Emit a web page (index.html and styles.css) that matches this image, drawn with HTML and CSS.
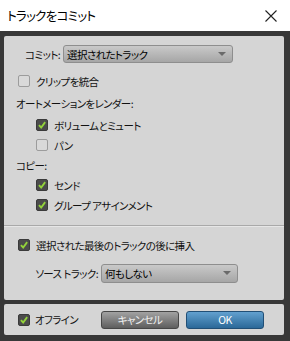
FILE: index.html
```html
<!DOCTYPE html>
<html lang="ja">
<head>
    <meta charset="UTF-8">
    <title>トラックをコミット</title>
    <link rel="stylesheet" href="styles.css">
</head>
<body>

<div class="dialog">
    <div class="titlebar">
        <span class="title">トラックをコミット</span>
        <svg class="close" width="12" height="12" viewBox="0 0 12 12">
            <path d="M0.5 0.5 L11.5 11.5 M11.5 0.5 L0.5 11.5" stroke="#222" stroke-width="1.1" fill="none"/>
        </svg>
    </div>

    <div class="frame">
        <div class="panel main">
            <div class="row row-commit">
                <span class="label label-commit">コミット:</span>
                <div class="select select-commit">選択されたトラック<span class="arrow"></span></div>
            </div>

            <div class="row row-clip">
                <span class="cb"></span>
                <span>クリップを統合</span>
            </div>

            <div class="row row-head">オートメーションをレンダー:</div>
            <div class="row indent">
                <span class="cb checked"><svg viewBox="0 0 12 12"><path d="M2.3 6.2 L5 9 L9.8 2.6" /></svg></span>
                <span>ボリュームとミュート</span>
            </div>
            <div class="row indent row-tight">
                <span class="cb"></span>
                <span>パン</span>
            </div>

            <div class="row row-head row-copy">コピー:</div>
            <div class="row indent row-tight">
                <span class="cb checked"><svg viewBox="0 0 12 12"><path d="M2.3 6.2 L5 9 L9.8 2.6" /></svg></span>
                <span>センド</span>
            </div>
            <div class="row indent row-tight">
                <span class="cb checked"><svg viewBox="0 0 12 12"><path d="M2.3 6.2 L5 9 L9.8 2.6" /></svg></span>
                <span>グループ アサインメント</span>
            </div>

            <div class="separator"></div>

            <div class="row row-insert">
                <span class="cb checked"><svg viewBox="0 0 12 12"><path d="M2.3 6.2 L5 9 L9.8 2.6" /></svg></span>
                <span>選択された最後のトラックの後に挿入</span>
            </div>

            <div class="row row-source">
                <span class="label label-source">ソース トラック:</span>
                <div class="select select-source">何もしない<span class="arrow"></span></div>
            </div>
        </div>

        <div class="panel footer">
            <div class="row">
                <span class="cb checked"><svg viewBox="0 0 12 12"><path d="M2.3 6.2 L5 9 L9.8 2.6" /></svg></span>
                <span>オフライン</span>
            </div>
            <div class="buttons">
                <button class="btn btn-cancel">キャンセル</button>
                <button class="btn btn-ok">OK</button>
            </div>
        </div>
    </div>
</div>

</body>
</html>
```

FILE: styles.css
```css
body {
    margin: 0;
    background-color: #3a3a3a;
    font-family: "Noto Sans CJK JP", "Noto Sans", sans-serif;
    font-size: 10.5px;
    font-feature-settings: "palt";
    letter-spacing: -0.6px;
    color: #111;
}
.dialog {
    width: 290px;
    height: 341px;
    display: flex;
    flex-direction: column;
}
.titlebar {
    height: 31px;
    background-color: #ffffff;
    display: flex;
    align-items: center;
    justify-content: space-between;
    padding: 0 13px 0 7px;
}
.title {
    font-size: 12.5px;
    letter-spacing: -0.7px;
    color: #000;
    margin-top: -1px;
}
.close {
    margin-top: 1px;
}
.frame {
    flex: 1;
    background-color: #383838;
    padding: 5px 6px 6px 4px;
    display: flex;
    flex-direction: column;
    gap: 4px;
}
.panel {
    background-color: #d5d5d5;
    border-radius: 2px;
}
.main {
    height: 264px;
    box-sizing: border-box;
    padding-top: 8px;
    display: flex;
    flex-direction: column;
}
.row {
    height: 20px;
    display: flex;
    align-items: center;
    gap: 6px;
    padding-left: 14px;
    white-space: nowrap;
}
.label {
    flex: none;
    text-align: right;
}
.row-commit {
    padding-left: 14px;
    gap: 3px;
}
.label-commit {
    width: 42px;
}
.row-clip {
    margin-top: 7px;
}
.row-head {
    margin-top: 2px;
    padding-left: 12px;
}
.indent {
    padding-left: 32px;
    margin-top: 2px;
}
.row-tight {
    margin-top: 0;
}
.row-copy {
    margin-top: 0;
}
.separator {
    margin-top: 10px;
    border-top: 1px solid #a9a9a9;
    border-bottom: 1px solid #e6e6e6;
}
.row-insert {
    margin-top: 8px;
}
.row-source {
    margin-top: 8px;
    padding-left: 28px;
    gap: 3px;
}
.label-source {
    width: 66px;
}
.cb {
    width: 12px;
    height: 12px;
    box-sizing: border-box;
    border: 1px solid #9c9c9c;
    border-radius: 2px;
    background-color: #d9d9d9;
    display: inline-flex;
    flex-shrink: 0;
}
.cb.checked {
    background-color: #4b4b4b;
    border-color: #3a3a3a;
}
.cb svg {
    width: 10px;
    height: 10px;
}
.cb svg path {
    fill: none;
    stroke: #93d33a;
    stroke-width: 2.2;
}
.select {
    position: relative;
    flex: none;
    height: 18px;
    box-sizing: border-box;
    border: 1px solid #8e8e8e;
    border-radius: 3px;
    background: linear-gradient(#c9c9c9, #a6a6a6);
    padding-left: 3px;
    display: flex;
    align-items: center;
    color: #000;
}
.select-commit {
    width: 170px;
}
.select-source {
    width: 137px;
    height: 19px;
}
.arrow {
    position: absolute;
    right: 6px;
    top: 6px;
    width: 0;
    height: 0;
    border-left: 4px solid transparent;
    border-right: 4px solid transparent;
    border-top: 4px solid #6a6a6a;
}
.footer {
    flex: 1;
    display: flex;
    align-items: center;
    justify-content: space-between;
    padding-right: 20px;
}
.footer .row {
    gap: 5px;
}
.buttons {
    display: flex;
    gap: 7px;
}
.btn {
    width: 78px;
    height: 18px;
    border-radius: 3px;
    font-family: inherit;
    font-size: 10.5px;
    letter-spacing: -0.6px;
    font-feature-settings: "palt";
    padding: 0;
    cursor: pointer;
}
.btn-cancel {
    background: linear-gradient(#a2a2a2, #5e5e5e);
    border: 1px solid #474747;
    color: #f0f0f0;
}
.btn-ok {
    background: linear-gradient(#62a0cf, #2b6898);
    border: 1px solid #214f76;
    color: #ffffff;
}
```
